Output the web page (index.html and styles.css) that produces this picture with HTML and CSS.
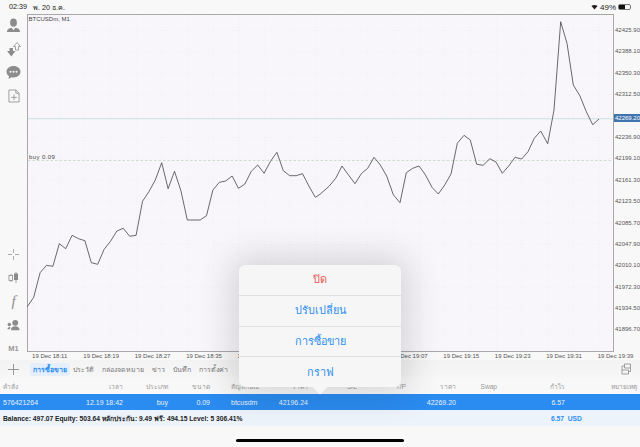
FILE: index.html
```html
<!DOCTYPE html>
<html lang="th">
<head>
  <meta charset="UTF-8">
  <meta name="viewport" content="width=device-width, initial-scale=1">
  <title>BTCUSDm, M1</title>
  <link rel="stylesheet" href="styles.css">
</head>
<body>
  <div class="screen">
    <div class="status">
      <div class="status-left"><span>02:39</span><span>พ. 20 ธ.ค.</span></div>
      <div class="status-right">
        <svg class="wifi" width="7" height="6" viewBox="0 0 10 8"><path d="M5 7.6 0.6 2.6C3 .6 7 .6 9.4 2.6Z" fill="#222"/></svg>
        <span>49%</span>
        <span class="battery"><span class="battery-fill"></span></span>
      </div>
    </div>

    <div class="main">
      <div class="sidebar">
        <div class="tool-group">
          <div class="tool">
            <svg width="15" height="15" viewBox="0 0 16 16"><ellipse cx="8" cy="5" rx="3.6" ry="4.4"/><path d="M1 15c0-3 2-4 5-4.600L8 13l2-2.600c3 .6 5 1.600 5 4.600Z"/></svg>
          </div>
          <div class="tool">
            <svg width="15" height="15" viewBox="0 0 15 15"><path d="M1 9h2.500V6H7v3h2.500L5.250 14.500Z"/><path d="M9.500 8V4.500H7.500L11 .6 14.500 4.500H12.500V8Z" fill="none" stroke="#8c8c8c" stroke-width=".8"/></svg>
          </div>
          <div class="tool">
            <svg width="15" height="15" viewBox="0 0 15 15"><path d="M7.500 1C11.400 1 14.500 3.500 14.500 6.800S11.400 12.500 7.500 12.500C6.800 12.500 6.100 12.400 5.500 12.300L2.500 14 3 11.300C1.400 10.200.5 8.600.5 6.800.5 3.500 3.600 1 7.500 1Z"/><circle cx="4.500" cy="6.800" r="1" fill="#f8f8f8"/><circle cx="7.500" cy="6.800" r="1" fill="#f8f8f8"/><circle cx="10.500" cy="6.800" r="1" fill="#f8f8f8"/></svg>
          </div>
          <div class="tool">
            <svg width="12" height="14" viewBox="0 0 13 15"><path d="M1 1h7.500L12 4.500V14H1Z" fill="none" stroke="#8c8c8c" stroke-width=".9"/><path d="M8.500 1v3.500H12M6.500 6v6M3.500 9h6" fill="none" stroke="#8c8c8c" stroke-width=".9"/></svg>
          </div>
        </div>
        <div class="tool-group">
          <div class="tool">
            <svg width="13" height="13" viewBox="0 0 13 13"><path d="M6.500 1v4M6.500 8v4M1 6.500h4M8 6.500h4" fill="none" stroke="#a2a2a2" stroke-width=".9"/></svg>
          </div>
          <div class="tool">
            <svg width="11" height="13" viewBox="0 0 11 13"><path d="M3 3v8M8 1v11" fill="none" stroke="#8c8c8c" stroke-width=".8"/><rect x="1" y="4.500" width="3.600" height="5" fill="#f8f8f8" stroke="#8c8c8c" stroke-width=".8"/><rect x="6" y="2.500" width="4" height="6.500"/></svg>
          </div>
          <div class="tool"><span class="tool-f">f</span></div>
          <div class="tool">
            <svg width="13" height="12" viewBox="0 0 15 13"><circle cx="9.500" cy="4" r="3.400"/><path d="M4.500 12.500c0-3 2-4.500 5-4.500s5 1.500 5 4.500Z"/><circle cx="2.700" cy="6" r="2"/><path d="M.5 11.500c0-1.800 1-2.800 2.500-2.800l1 .3-.6 2.500Z"/></svg>
          </div>
          <div class="tool tool-label">M1</div>
        </div>
      </div>

      <div class="chart-col">
        <div class="chart-row">
          <div class="plot">
            <svg class="plot-svg" viewBox="28 15 585 336">
              <defs>
                <pattern id="grid" patternUnits="userSpaceOnUse" x="7.300" y="8.600" width="25.720" height="21.400">
                  <path d="M0 0V21.400M0 0H25.720" fill="none" stroke="#d2d2d6" stroke-width=".6" stroke-dasharray="1 2"/>
                </pattern>
              </defs>
              <rect x="28" y="15" width="585" height="336" fill="url(#grid)" opacity=".55"/>
              <line x1="28" y1="118.700" x2="613" y2="118.700" stroke="#d5e3ec" stroke-width="1.200"/>
              <line x1="28" y1="160.500" x2="613" y2="160.500" stroke="#b9d4b9" stroke-width=".7" stroke-dasharray="2.500 2"/>
              <polyline class="price-line" points="27.300,306.700 33.700,297.300 40.100,272.700 46.500,265.300 52.900,266.300 59.300,243.700 65.700,248.700 72.100,235.300 78.500,238.700 84.900,240.700 91.300,262.700 97.700,264.300 104.100,249.300 110.500,241.300 116.900,231 123.300,228.300 129.700,236.300 136.100,235.300 142.500,201.300 148.900,191.700 155.300,180 161.700,162.700 168.100,188.700 174.500,171.300 180.900,190.700 187.300,220 193.700,220 200.100,220 206.500,215.700 212.900,190 219.300,182.300 225.700,181 232.100,176 238.500,188.300 244.900,184 251.300,171.300 257.700,165 264.100,173.300 270.500,161.300 276.900,152.300 283.300,170.700 289.700,175.700 296.100,175.700 302.500,173.700 308.900,186 315.300,197.300 320,194.300 329.300,186 335.700,178.300 342,166 348.300,174.700 355,183.700 361.300,173.700 367.700,168.300 374,157.300 380.300,165 386.700,176 393.300,194.700 400,202.700 406.300,172.700 412.700,168.300 419,166 425.300,174.700 432,187.300 438.300,194 444.700,185 451,174 457.300,143.300 464,135.300 470.300,140 476.700,164.300 483.300,165.300 489.700,158.700 496,162 502.300,173.300 508.700,166 515,157.300 521.700,159 528,151.700 534.300,138.300 540.700,131 547.700,143.700 554,110 560.700,21.700 567,43.300 573.300,85 580,96 586.300,111.700 592.700,124.700 599,119"/>
              <text class="plot-text" x="28.500" y="20.500">BTCUSDm, M1</text>
              <text class="plot-text plot-text-wide" x="29" y="159">buy 0.09</text>
            </svg>
          </div>
          <div class="y-axis">
            <span>42425.90</span><span>42388.10</span><span>42350.30</span><span>42312.50</span>
            <span>42274.70</span><span>42236.90</span><span>42199.10</span><span>42161.30</span>
            <span>42123.50</span><span>42085.70</span><span>42047.90</span><span>42010.10</span>
            <span>41972.30</span><span>41934.50</span><span>41896.70</span>
            <span class="price-tag">42269.20</span>
          </div>
        </div>
        <div class="x-axis">
          <span>19 Dec 18:11</span><span>19 Dec 18:19</span><span>19 Dec 18:27</span><span>19 Dec 18:35</span>
          <span>19 Dec 18:43</span><span>19 Dec 18:51</span><span>19 Dec 18:59</span><span>19 Dec 19:07</span>
          <span>19 Dec 19:15</span><span>19 Dec 19:23</span><span>19 Dec 19:31</span><span>19 Dec 19:39</span>
        </div>
      </div>
    </div>

    <div class="tabs">
      <div class="tab-plus">
        <svg width="13" height="13" viewBox="0 0 13 13"><path d="M6.500 1v11M1 6.500h11" fill="none" stroke="#8c8c8c" stroke-width=".9"/></svg>
      </div>
      <div class="tab-list">
        <span class="tab active">การซื้อขาย</span>
        <span class="tab">ประวัติ</span>
        <span class="tab">กล่องจดหมาย</span>
        <span class="tab">ข่าว</span>
        <span class="tab">บันทึก</span>
        <span class="tab">การตั้งค่า</span>
      </div>
      <svg class="tab-settings" width="12" height="12" viewBox="0 0 12 12"><path d="M3.500 1H9.500V5H3.500ZM1 7H7.500V11H1ZM9.500 5V8.500H7.500M3.500 3H1V7" fill="none" stroke="#8c8c8c" stroke-width=".8"/></svg>
    </div>

    <div class="cols cols-head">
      <span class="col-order">คำสั่ง</span><span>เวลา</span><span>ประเภท</span><span>ขนาด</span>
      <span class="col-symbol">สัญลักษณ์</span><span>ราคา</span><span>S/L</span><span>T/P</span>
      <span>ราคา</span><span>Swap</span><span>กำไร</span><span>หมายเหตุ</span>
    </div>
    <div class="cols cols-row">
      <span class="col-order">576421264</span><span>12.19 18:42</span><span>buy</span><span>0.09</span>
      <span class="col-symbol">btcusdm</span><span>42196.24</span><span></span><span></span>
      <span>42269.20</span><span></span><span>6.57</span><span></span>
    </div>
    <div class="balance">
      <span>Balance: 497.07 Equity: 503.64 หลักประกัน: 9.49 ฟรี: 494.15 Level: 5 306.41%</span>
      <span class="balance-total">6.57&nbsp; USD</span>
    </div>

    <div class="footer"><div class="home-bar"></div></div>

    <div class="popover">
      <div class="popover-item danger">ปิด</div>
      <div class="popover-item">ปรับเปลี่ยน</div>
      <div class="popover-item">การซื้อขาย</div>
      <div class="popover-item">กราฟ</div>
    </div>
  </div>
</body>
</html>
```

FILE: styles.css
```css
* {
  margin: 0;
  padding: 0;
  box-sizing: border-box;
}

body {
  font-family: "Liberation Sans", "Noto Sans", Arial, sans-serif;
  background-color: #f8f8f8;
  color: #222;
  overflow: hidden;
}

.screen {
  position: relative;
  width: 640px;
  height: 447px;
  display: flex;
  flex-direction: column;
  overflow: hidden;
}

/* status bar */
.status {
  height: 14px;
  display: flex;
  justify-content: space-between;
  align-items: center;
  padding: 0 9px;
  font-size: 7.200px;
}

.status-left {
  display: flex;
  gap: 6px;
}

.status-right {
  display: flex;
  align-items: center;
  gap: 2px;
  font-size: 8px;
}

.battery {
  width: 13px;
  height: 6px;
  border: 1px solid #777;
  border-radius: 2px;
  display: flex;
}

.battery-fill {
  width: 6px;
  background: #111;
}

/* chart area */
.main {
  height: 346px;
  display: flex;
}

.sidebar {
  flex: none;
  width: 27px;
  display: flex;
  flex-direction: column;
  justify-content: space-between;
}

.tool {
  height: 23.500px;
  display: flex;
  align-items: center;
  justify-content: center;
  fill: #8c8c8c;
}

.tool-f {
  font-family: "Liberation Serif", serif;
  font-style: italic;
  font-size: 15px;
  color: #8c8c8c;
}

.tool-label {
  font-size: 7.500px;
  font-weight: bold;
  color: #999;
}

.chart-col {
  flex: 1;
  min-width: 0;
  display: flex;
  flex-direction: column;
}

.chart-row {
  height: 338px;
  display: flex;
}

.plot {
  flex: none;
  width: 587px;
  border: 1px solid #a8a8a8;
  background-color: #f8f6fb;
}

.plot-svg {
  display: block;
  width: 585px;
  height: 336px;
  overflow: visible;
}

.price-line {
  fill: none;
  stroke: #444;
  stroke-width: .8;
}

.plot-text {
  font-size: 6px;
  fill: #444;
}

.plot-text-wide {
  letter-spacing: .4px;
}

.y-axis {
  position: relative;
  flex: 1;
  display: grid;
  grid-auto-rows: 21.400px;
  padding-top: 11px;
  font-size: 6px;
  color: #555;
  white-space: nowrap;
}

.y-axis span {
  line-height: 10px;
  padding-left: 1px;
}

.y-axis .price-tag {
  position: absolute;
  left: 0;
  top: 100px;
  width: 26px;
  height: 8px;
  line-height: 8px;
  background: #3f74ad;
  color: #fff;
}

.x-axis {
  height: 8px;
  display: flex;
  margin-left: -3px;
  font-size: 6px;
  line-height: 8px;
  color: #555;
}

.x-axis span {
  width: 51.450px;
  flex-shrink: 0;
  text-align: center;
  white-space: nowrap;
}

/* tabs */
.tabs {
  height: 18px;
  display: flex;
  align-items: center;
  background: linear-gradient(#f3f3f3, #f7f7f7);
}

.tab-plus {
  width: 27px;
  display: flex;
  justify-content: center;
}

.tab-list {
  flex: 1;
  display: flex;
  align-items: center;
  gap: 8px;
  padding-left: 3px;
  font-size: 7px;
  color: #777;
}

.tab.active {
  margin-right: -5px;
  padding: 1px 3px;
  border-radius: 3px;
  background: #e4effb;
  color: #2c8ef0;
  font-weight: bold;
}

.tab-settings {
  margin-right: 7px;
}

/* positions table */
.cols {
  display: grid;
  grid-template-columns: 60px 63px 45px 42px 55px 43px 49px 49px 50px 41px 68px 72px;
  text-align: right;
  font-size: 7px;
  white-space: nowrap;
  align-items: center;
}

.col-order {
  text-align: left;
  padding-left: 3px;
}

.col-symbol {
  text-align: left;
  padding-left: 21px;
}

.cols-head {
  height: 16px;
  color: #999;
  font-size: 6.600px;
}

.cols-row {
  height: 16px;
  background: #2a8bf0;
  color: #e8f2fd;
}

.balance {
  height: 16px;
  display: flex;
  align-items: center;
  padding-left: 3px;
  background: #edf3fa;
  font-size: 6.700px;
  font-weight: bold;
  color: #222;
  white-space: nowrap;
}

.balance-total {
  position: absolute;
  left: 551px;
  color: #2c8ef0;
}

.footer {
  flex: 1;
  display: flex;
  justify-content: center;
  padding-top: 13px;
}

.home-bar {
  width: 168px;
  height: 3px;
  border-radius: 2px;
  background: #000;
}

/* action menu over the table */
.popover {
  position: absolute;
  left: 239px;
  top: 265px;
  width: 162px;
  height: 122px;
  display: flex;
  flex-direction: column;
  border-radius: 6px;
  background: #f6f6f6;
  box-shadow: 0 0 34px 8px rgba(0,0,0,0.14);
}

.popover::after {
  content: "";
  position: absolute;
  left: 75px;
  bottom: -5px;
  width: 12px;
  height: 12px;
  background: #f6f6f6;
  transform: rotate(45deg);
}

.popover-item {
  flex: 1;
  display: flex;
  align-items: center;
  justify-content: center;
  font-size: 10.800px;
  color: #2c8ef0;
  border-top: 1px solid #e0e0e0;
  position: relative;
  z-index: 1;
}

.popover-item.danger {
  color: #e8574f;
  border-top: none;
}
```
